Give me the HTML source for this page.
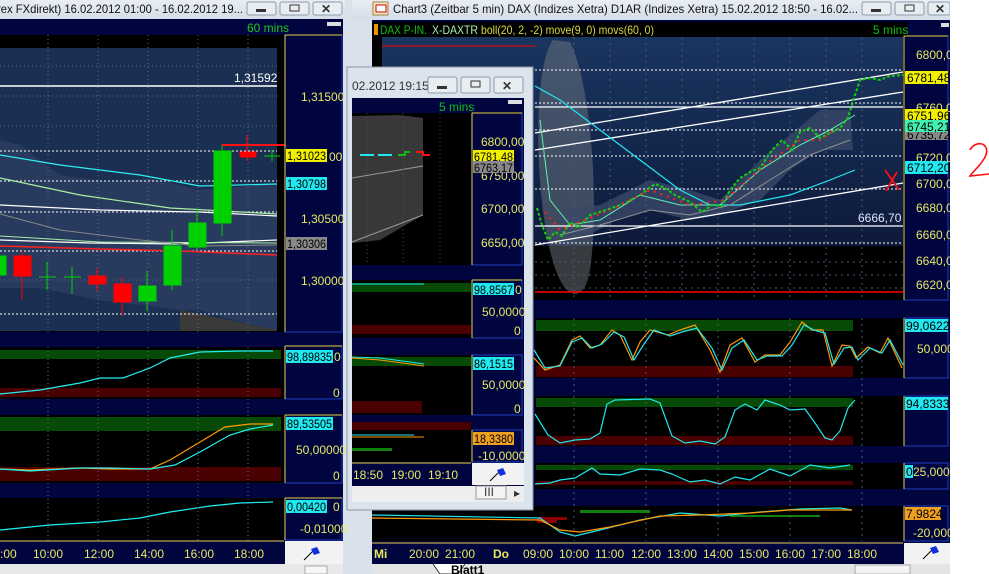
<!DOCTYPE html>
<html><head><meta charset="utf-8"><style>
html,body{margin:0;padding:0;background:#fff;overflow:hidden}
svg{display:block}
text{font-family:"Liberation Sans",sans-serif;font-size:12px}
</style></head><body>
<svg width="989" height="574" viewBox="0 0 989 574" xmlns="http://www.w3.org/2000/svg">
<defs>
<linearGradient id="bg1" x1="0" y1="0" x2="0" y2="1"><stop offset="0" stop-color="#1a3560"/><stop offset="1" stop-color="#0d1a3a"/></linearGradient>
<linearGradient id="tb" x1="0" y1="0" x2="0" y2="1"><stop offset="0" stop-color="#e9eef4"/><stop offset="1" stop-color="#d5dde8"/></linearGradient>
</defs>
<!-- ============ LEFT WINDOW ============ -->
<rect x="0" y="0" width="352" height="574" fill="#d9e1ea"/>
<rect x="0" y="0" width="345" height="19" fill="url(#tb)"/>
<text x="-3" y="13" fill="#111" textLength="246" lengthAdjust="spacingAndGlyphs">rex FXdirekt) 16.02.2012 01:00 - 16.02.2012 19...</text>
<g fill="#e8edf2" stroke="#8e9aa8"><rect x="247" y="2" width="29" height="13" rx="2"/><rect x="280" y="2" width="29" height="13" rx="2"/><rect x="313" y="2" width="29" height="13" rx="2"/></g>
<rect x="256" y="9" width="10" height="3" fill="#333"/><rect x="290" y="5" width="9" height="6" fill="none" stroke="#333"/>
<text x="321" y="13" fill="#333" font-weight="bold">✕</text>
<rect x="0" y="19" width="343" height="545" fill="#000540"/>
<text x="247" y="32" fill="#1ec81e">60 mins</text>
<rect x="327" y="22" width="14" height="4" fill="#ddd"/>
<!-- main chart -->
<rect x="0" y="35" width="284" height="297" fill="#000"/>
<rect x="0" y="48" width="277" height="283" fill="#1b2f52"/>
<polygon points="0,140 20,145 60,175 110,182 150,178 200,190 240,187 277,183 277,330 240,322 200,310 180,310 150,306 100,300 40,288 0,288" fill="#2c3e62" opacity="0.8"/>
<polygon points="180,310 277,330 277,331 180,331" fill="#3a3a3a"/>
<g stroke="#5a6a80" stroke-dasharray="1,3" stroke-width="1"><line x1="48" y1="35" x2="48" y2="332"/><line x1="98" y1="35" x2="98" y2="332"/><line x1="148" y1="35" x2="148" y2="332"/><line x1="198" y1="35" x2="198" y2="332"/><line x1="248" y1="35" x2="248" y2="332"/>
<line x1="0" y1="66" x2="277" y2="66"/><line x1="0" y1="96" x2="277" y2="96"/><line x1="0" y1="126" x2="277" y2="126"/><line x1="0" y1="280" x2="277" y2="280"/></g>
<g stroke="#fff" stroke-dasharray="2,2"><line x1="0" y1="151" x2="277" y2="151"/><line x1="0" y1="181" x2="277" y2="181"/><line x1="0" y1="212" x2="277" y2="212"/><line x1="0" y1="251" x2="277" y2="251"/><line x1="0" y1="314" x2="277" y2="314"/></g>
<line x1="0" y1="86" x2="277" y2="86" stroke="#fff" stroke-width="1.5"/>
<text x="234" y="82" fill="#fff">1,31592</text>
<polyline points="0,155 60,165 140,175 200,186 277,184" fill="none" stroke="#2cf0f0" stroke-width="1.2"/>
<polyline points="0,178 80,195 170,208 277,214" fill="none" stroke="#a8f0a0" stroke-width="1.2"/>
<polyline points="0,205 100,210 200,212 277,216" fill="none" stroke="#fff" stroke-width="1.2"/>
<polyline points="0,240 90,243 180,244 277,240" fill="none" stroke="#fff" stroke-width="1.2"/>
<polyline points="0,246 100,249 180,251 277,255" fill="none" stroke="#ff2020" stroke-width="1.5"/>
<polyline points="0,236 100,242 277,243" fill="none" stroke="#a8f0a0" stroke-width="1"/>
<polyline points="0,214 60,230 140,240 200,246 277,245" fill="none" stroke="#888" stroke-width="1"/>
<g fill="#00d000" stroke="#00d000"><rect x="0" y="256" width="6" height="19"/><line x1="47" y1="262" x2="47" y2="290"/><line x1="39" y1="277" x2="56" y2="277"/><line x1="72" y1="267" x2="72" y2="294"/><line x1="64" y1="277" x2="81" y2="277"/>
<line x1="147" y1="271" x2="147" y2="311"/><rect x="139" y="286" width="17" height="15"/><line x1="172" y1="230" x2="172" y2="290"/><rect x="164" y="246" width="17" height="39"/>
<line x1="197" y1="208" x2="197" y2="250"/><rect x="189" y="223" width="17" height="24"/><line x1="222" y1="145" x2="222" y2="236"/><rect x="214" y="151" width="17" height="72"/>
<line x1="272" y1="150" x2="272" y2="161"/><line x1="264" y1="156" x2="280" y2="156"/></g>
<g fill="#ff0000" stroke="#ff0000"><line x1="22" y1="251" x2="22" y2="300"/><rect x="14" y="256" width="17" height="20"/><line x1="97" y1="268" x2="97" y2="291"/><rect x="89" y="276" width="17" height="8"/>
<line x1="122" y1="277" x2="122" y2="316"/><rect x="114" y="284" width="17" height="18"/><line x1="247" y1="135" x2="247" y2="161"/><rect x="240" y="152" width="16" height="5"/></g>
<polyline points="222,145 287,145" stroke="#ff1010" stroke-width="2" fill="none"/>
<polyline points="290,136 306,145 292,154" stroke="#ff1010" stroke-width="2" fill="none"/>
<path d="M322,133 C312,133 310,142 318,145 C326,148 324,156 314,156" stroke="#ff1010" stroke-width="2" fill="none"/>
<path d="M328,130 L326,152 L337,152" stroke="#ff1010" stroke-width="2" fill="none"/>
<rect x="285" y="35" width="57" height="297" fill="#000540" stroke="#2040c0"/>
<line x1="285" y1="35" x2="285" y2="332" stroke="#e8d040"/>
<line x1="285" y1="35" x2="342" y2="35" stroke="#e8d040"/>
<g fill="#e8e860"><text x="301" y="101">1,31500</text><text x="301" y="223">1,30500</text><text x="301" y="285">1,30000</text><text x="329" y="161">00</text></g>
<rect x="286" y="149" width="41" height="13" fill="#f0f000"/><text x="287" y="160" fill="#000" textLength="39" lengthAdjust="spacingAndGlyphs">1,31023</text>
<rect x="286" y="177" width="41" height="13" fill="#20e8f0"/><text x="287" y="188" fill="#000" textLength="39" lengthAdjust="spacingAndGlyphs">1,30798</text>
<rect x="286" y="237" width="41" height="13" fill="#888"/><text x="287" y="248" fill="#000" textLength="39" lengthAdjust="spacingAndGlyphs">1,30306</text>
<!-- osc1 -->
<rect x="0" y="347" width="284" height="52" fill="#000"/>
<rect x="0" y="350" width="281" height="9" fill="#064a06"/><rect x="0" y="388" width="281" height="9" fill="#4a0000"/>
<polyline points="0,394 40,390 80,383 100,378 123,378 150,368 170,358 200,352 240,351 273,351" fill="none" stroke="#20f0f0" stroke-width="1.2"/>
<rect x="285" y="346" width="57" height="53" fill="#000540" stroke="#2040c0"/><line x1="285" y1="346" x2="342" y2="346" stroke="#e8d040"/><line x1="285" y1="346" x2="285" y2="399" stroke="#e8d040"/>
<rect x="286" y="350" width="47" height="13" fill="#20e8f0"/><text x="287" y="361" fill="#000" textLength="45" lengthAdjust="spacingAndGlyphs">98,89835</text><text x="334" y="361" fill="#e8e860">0</text><text x="333" y="397" fill="#e8e860">0</text>
<!-- osc2 -->
<rect x="0" y="415" width="284" height="68" fill="#000"/>
<rect x="0" y="417" width="281" height="14" fill="#064a06"/><rect x="0" y="467" width="281" height="14" fill="#4a0000"/>
<polyline points="0,469 30,470 80,468 110,469 150,469 170,460 200,442 225,427 250,424 273,424" fill="none" stroke="#ff9900" stroke-width="1.2"/>
<polyline points="0,469 30,471 80,468 110,468 150,469 175,465 200,452 230,435 250,429 273,425" fill="none" stroke="#20f0f0" stroke-width="1.2"/>
<rect x="285" y="415" width="57" height="68" fill="#000540" stroke="#2040c0"/><line x1="285" y1="415" x2="342" y2="415" stroke="#e8d040"/><line x1="285" y1="415" x2="285" y2="483" stroke="#e8d040"/>
<rect x="286" y="417" width="47" height="13" fill="#20e8f0"/><text x="287" y="428" fill="#000" textLength="45" lengthAdjust="spacingAndGlyphs">89,53505</text><text x="296" y="454" fill="#e8e860">50,00000</text><text x="333" y="480" fill="#e8e860">0</text>
<!-- osc3 -->
<rect x="0" y="498" width="284" height="42" fill="#000"/>
<polyline points="0,530 50,525 100,522 140,518 170,512 210,506 240,503 273,502" fill="none" stroke="#20f0f0" stroke-width="1.2"/>
<rect x="285" y="498" width="57" height="42" fill="#000540" stroke="#2040c0"/><line x1="285" y1="498" x2="342" y2="498" stroke="#e8d040"/><line x1="285" y1="498" x2="285" y2="540" stroke="#e8d040"/>
<rect x="286" y="500" width="41" height="13" fill="#20e8f0"/><text x="287" y="511" fill="#000" textLength="39" lengthAdjust="spacingAndGlyphs">0,00420</text><text x="333" y="511" fill="#e8e860">0</text><text x="300" y="533" fill="#e8e860">-0,01000</text>
<g stroke="#5a6a80" stroke-dasharray="1,3"><line x1="48" y1="347" x2="48" y2="540"/><line x1="98" y1="347" x2="98" y2="540"/><line x1="148" y1="347" x2="148" y2="540"/><line x1="198" y1="347" x2="198" y2="540"/><line x1="248" y1="347" x2="248" y2="540"/></g>
<line x1="0" y1="541" x2="284" y2="541" stroke="#e8d040"/>
<g fill="#e8e860"><text x="0" y="558">:00</text><text x="33" y="558">10:00</text><text x="84" y="558">12:00</text><text x="134" y="558">14:00</text><text x="184" y="558">16:00</text><text x="234" y="558">18:00</text></g>
<rect x="285" y="541" width="58" height="23" fill="#f2f2f2"/>
<path d="M304,560 L316,548" stroke="#000"/><path d="M311,549 L317,547 L320,553 L314,555 Z" fill="#1030e0"/>
<rect x="0" y="564" width="343" height="10" fill="#e8e8e8"/><rect x="305" y="566" width="22" height="8" fill="#f6f6f6" stroke="#aaa"/>
<!-- ============ RIGHT WINDOW ============ -->
<rect x="352" y="0" width="598" height="574" fill="#d9e1ea"/>
<rect x="352" y="0" width="598" height="19" fill="url(#tb)"/>
<rect x="373" y="2" width="15" height="13" fill="#f4e8c0" stroke="#a08040"/><rect x="376" y="5" width="10" height="7" fill="#fff" stroke="#c00"/>
<text x="393" y="13" fill="#111" textLength="465" lengthAdjust="spacingAndGlyphs">Chart3 (Zeitbar 5 min)  DAX (Indizes Xetra) D1AR (Indizes Xetra) 15.02.2012 18:50 - 16.02...</text>
<g fill="#e8edf2" stroke="#8e9aa8"><rect x="862" y="2" width="29" height="13" rx="2"/><rect x="895" y="2" width="29" height="13" rx="2"/><rect x="928" y="2" width="22" height="13" rx="2"/></g>
<rect x="871" y="9" width="10" height="3" fill="#333"/><rect x="905" y="5" width="9" height="6" fill="none" stroke="#333"/><text x="935" y="13" fill="#333" font-weight="bold">✕</text>
<rect x="372" y="20" width="578" height="554" fill="#000540"/>
<rect x="372" y="22" width="535" height="14" fill="#000"/>
<rect x="374" y="24" width="4" height="11" fill="#f09000"/>
<text x="380" y="34" fill="#10c010" textLength="47" lengthAdjust="spacingAndGlyphs">DAX P-IN.</text><text x="432" y="34" fill="#a8f0a8" textLength="46" lengthAdjust="spacingAndGlyphs">X-DAXTR</text><text x="481" y="34" fill="#d8d840" textLength="173" lengthAdjust="spacingAndGlyphs">boll(20, 2, -2) move(9, 0) movs(60, 0)</text>
<text x="873" y="34" fill="#10c010">5 mins</text><rect x="941" y="23" width="8" height="4" fill="#ddd"/>
<rect x="372" y="36" width="532" height="264" fill="#000"/>
<rect x="382" y="37" width="521" height="209" fill="url(#bg1)"/>
<line x1="382" y1="46" x2="535" y2="46" stroke="#ff0000"/>
<path d="M553,40 C530,70 535,230 560,280 C570,300 585,300 590,270 C600,200 590,80 570,42 Z" fill="#707880" opacity="0.5"/>
<polygon points="560,210 600,205 650,180 690,190 720,200 760,160 790,135 820,110 850,110 853,150 820,150 790,170 760,200 720,215 690,220 650,210 620,218 580,240 560,245" fill="#3a4868" opacity="0.8"/>
<g stroke="#4a5a78" stroke-dasharray="2,4"><line x1="574" y1="37" x2="574" y2="300"/><line x1="610" y1="37" x2="610" y2="300"/><line x1="646" y1="37" x2="646" y2="300"/><line x1="682" y1="37" x2="682" y2="300"/><line x1="718" y1="37" x2="718" y2="300"/><line x1="754" y1="37" x2="754" y2="300"/><line x1="790" y1="37" x2="790" y2="300"/><line x1="826" y1="37" x2="826" y2="300"/><line x1="862" y1="37" x2="862" y2="300"/>
<line x1="535" y1="262" x2="903" y2="262"/><line x1="535" y1="275" x2="903" y2="275"/><line x1="535" y1="288" x2="903" y2="288"/></g>
<g stroke="#fff" stroke-dasharray="2,2"><line x1="535" y1="70" x2="903" y2="70"/><line x1="535" y1="103" x2="903" y2="103"/><line x1="535" y1="130" x2="903" y2="130"/><line x1="535" y1="156" x2="903" y2="156"/><line x1="535" y1="189" x2="903" y2="189"/><line x1="535" y1="243" x2="903" y2="243"/></g>
<g stroke="#fff" stroke-width="1.3"><line x1="535" y1="133" x2="903" y2="72"/><line x1="535" y1="150" x2="903" y2="92"/><line x1="535" y1="107" x2="903" y2="107"/><line x1="535" y1="226" x2="903" y2="226"/><line x1="535" y1="245" x2="903" y2="183"/></g>
<text x="858" y="222" fill="#e0e8ff">6666,70</text>
<polyline points="535,86 560,100 600,130 640,160 680,190 710,205 740,205 790,195 830,180 855,170" fill="none" stroke="#20e8f0" stroke-width="1.2"/>
<polyline points="540,120 550,200 570,225 600,220 640,195 680,205 720,205 760,170 800,145 830,130 855,115" fill="none" stroke="#60f0b0" stroke-width="1"/>
<polyline points="560,235 600,225 650,210 690,215 730,205 770,180 810,155 850,140" fill="none" stroke="#909090" stroke-width="1"/>
<polyline points="537,208 542,225 548,240 555,232 562,236 570,222 578,228 590,215 600,212 612,208 625,203 640,195 655,184 665,188 675,195 690,202 702,212 712,205 722,206 730,190 740,178 750,172 760,168 772,150 782,140 792,150 800,132 810,128 820,138 830,133 840,128 848,118 855,95 860,80 870,78 880,80 890,76 903,75" fill="none" stroke="#10d010" stroke-width="2" stroke-dasharray="3,2"/>
<polyline points="545,212 560,230 610,210 650,190 690,205 725,200 765,165 800,140 820,140 835,130" fill="none" stroke="#ff2020" stroke-width="2" stroke-dasharray="2,5"/>
<line x1="535" y1="292" x2="903" y2="292" stroke="#ff0000" stroke-width="1.5"/>
<path d="M885,170 L899,190 M897,172 L886,191" stroke="#ff1010" stroke-width="1.8"/>
<rect x="904" y="36" width="44" height="264" fill="#000540" stroke="#2040c0"/><line x1="904" y1="36" x2="904" y2="300" stroke="#e8d040"/><line x1="904" y1="36" x2="948" y2="36" stroke="#e8d040"/>
<g fill="#e8e860"><text x="916" y="59">6800,0</text><text x="916" y="112">6760,0</text><text x="916" y="162">6720,0</text><text x="916" y="188">6700,0</text><text x="916" y="212">6680,0</text><text x="916" y="239">6660,0</text><text x="916" y="265">6640,0</text><text x="916" y="289">6620,0</text></g>
<rect x="905" y="71" width="43" height="13" fill="#f0f000"/><text x="907" y="82" fill="#000">6781,48</text>
<rect x="905" y="129" width="43" height="11" fill="#888"/><text x="907" y="139" fill="#000">6735,72</text>
<rect x="905" y="109" width="43" height="12" fill="#f0f000"/><text x="907" y="120" fill="#000">6751,96</text>
<rect x="905" y="120" width="43" height="12" fill="#40f0b0"/><text x="907" y="131" fill="#000">6745,21</text>
<rect x="905" y="161" width="43" height="13" fill="#20e8f0"/><text x="907" y="172" fill="#000">6712,20</text>
<!-- right osc1 -->
<rect x="535" y="318" width="368" height="60" fill="#000"/>
<rect x="536" y="320" width="317" height="11" fill="#064a06"/><rect x="536" y="366" width="317" height="11" fill="#4a0000"/>
<polyline points="534,358 545,370 560,365 572,340 580,336 590,348 600,345 612,330 620,335 632,360 640,342 650,330 668,335 680,330 695,325 710,350 720,372 730,345 742,338 755,362 765,355 780,355 790,342 802,322 812,330 823,330 832,366 842,345 850,346 856,358 868,347 880,353 888,338 902,368" fill="none" stroke="#ff9900" stroke-width="1.2"/>
<polyline points="534,350 545,368 560,366 572,342 582,338 592,348 602,344 614,332 624,337 634,360 644,344 654,330 670,336 682,332 697,328 712,348 722,370 732,348 744,340 757,360 767,356 782,356 792,345 804,325 814,330 825,333 834,364 844,348 852,347 858,360 870,348 882,353 890,340 903,365" fill="none" stroke="#20e8f0" stroke-width="1.2"/>
<rect x="904" y="318" width="44" height="60" fill="#000540" stroke="#2040c0"/><line x1="904" y1="318" x2="904" y2="378" stroke="#e8d040"/>
<rect x="905" y="319" width="43" height="13" fill="#20e8f0"/><text x="906" y="330" fill="#000">99,0622</text><text x="917" y="353" fill="#e8e860">50,000</text>
<!-- right osc2 -->
<rect x="535" y="396" width="368" height="50" fill="#000"/>
<rect x="536" y="398" width="317" height="9" fill="#064a06"/><rect x="536" y="436" width="317" height="9" fill="#4a0000"/>
<polyline points="535,414 548,435 560,443 575,440 590,439 600,433 607,404 615,400 650,399 660,403 672,436 685,443 700,441 715,444 725,437 735,410 745,404 757,410 765,400 780,405 790,410 805,409 815,423 825,438 832,440 840,431 848,408 855,400" fill="none" stroke="#20e8f0" stroke-width="1.2"/>
<rect x="904" y="396" width="44" height="50" fill="#000540" stroke="#2040c0"/><line x1="904" y1="396" x2="904" y2="446" stroke="#e8d040"/>
<rect x="905" y="397" width="43" height="13" fill="#20e8f0"/><text x="906" y="408" fill="#000">94,8333</text>
<!-- right osc3 -->
<rect x="535" y="463" width="368" height="26" fill="#000"/>
<rect x="536" y="465" width="317" height="5" fill="#064a06"/><rect x="536" y="481" width="317" height="4" fill="#4a0000"/>
<polyline points="535,484 550,483 560,480 575,478 592,468 600,474 620,475 640,469 660,470 672,474 690,482 705,480 720,484 735,477 750,480 770,469 790,476 810,465 830,468 850,465" fill="none" stroke="#20e8f0" stroke-width="1.2"/>
<rect x="904" y="463" width="44" height="26" fill="#000540" stroke="#2040c0"/><line x1="904" y1="463" x2="904" y2="489" stroke="#e8d040"/>
<rect x="905" y="465" width="8" height="13" fill="#20e8f0"/><text x="906" y="476" fill="#000">0</text><text x="913" y="476" fill="#e8e860">25,000</text>
<!-- macd -->
<rect x="372" y="506" width="531" height="35" fill="#000"/>
<g fill="#8b0000"><rect x="537" y="517" width="20" height="6"/><rect x="557" y="517" width="10" height="3"/></g>
<g fill="#108010"><rect x="580" y="510" width="70" height="3"/><rect x="730" y="515" width="90" height="2"/></g>
<polyline points="372,515 540,518 560,532 575,536 600,530 640,520 680,513 720,516 760,512 800,509 840,508 852,510" fill="none" stroke="#20e8f0" stroke-width="1.2"/>
<polyline points="372,518 540,520 560,530 580,532 610,527 660,516 700,515 750,513 790,510 830,510 852,510" fill="none" stroke="#ff9900" stroke-width="1.2"/>
<rect x="904" y="506" width="44" height="35" fill="#000540" stroke="#2040c0"/><line x1="904" y1="506" x2="904" y2="541" stroke="#e8d040"/>
<rect x="905" y="507" width="36" height="13" fill="#f0a020"/><text x="906" y="518" fill="#000">7,9824</text><text x="913" y="537" fill="#e8e860">-20,000</text>
<g stroke="#4a5a78" stroke-dasharray="2,4"><line x1="574" y1="318" x2="574" y2="541"/><line x1="646" y1="318" x2="646" y2="541"/><line x1="718" y1="318" x2="718" y2="541"/><line x1="790" y1="318" x2="790" y2="541"/><line x1="862" y1="318" x2="862" y2="541"/></g>
<line x1="372" y1="543" x2="903" y2="543" stroke="#e8d040"/>
<g fill="#e8e860"><text x="374" y="558" font-weight="bold">Mi</text><text x="409" y="558">20:00</text><text x="445" y="558">21:00</text><text x="493" y="558" font-weight="bold">Do</text><text x="523" y="558">09:00</text><text x="559" y="558">10:00</text><text x="595" y="558">11:00</text><text x="631" y="558">12:00</text><text x="667" y="558">13:00</text><text x="703" y="558">14:00</text><text x="739" y="558">15:00</text><text x="775" y="558">16:00</text><text x="811" y="558">17:00</text><text x="847" y="558">18:00</text></g>
<rect x="904" y="543" width="46" height="21" fill="#f2f2f2"/>
<path d="M923,559 L935,547" stroke="#000"/><path d="M930,548 L936,546 L939,552 L933,554 Z" fill="#1030e0"/>
<rect x="372" y="564" width="578" height="10" fill="#e4e4e4"/>
<path d="M433,564 L440,574 L458,574 L465,564" fill="#fff" stroke="#333"/><text x="451" y="574" fill="#000" font-weight="bold" font-size="11">Blatt1</text>
<rect x="855" y="565" width="55" height="9" fill="#f4f4f4" stroke="#aaa"/>
<!-- ============ FLOATING WINDOW ============ -->
<rect x="347" y="67" width="186" height="443" fill="#dbe3ec" stroke="#8a96a6"/>
<text x="352" y="90" fill="#333">02.2012 19:15</text>
<g fill="#e8edf2" stroke="#8e9aa8"><rect x="428" y="77" width="29" height="16" rx="2"/><rect x="461" y="77" width="29" height="16" rx="2"/><rect x="494" y="77" width="29" height="16" rx="2"/></g>
<rect x="437" y="86" width="10" height="3" fill="#333"/><rect x="471" y="81" width="9" height="6" fill="none" stroke="#333"/><text x="502" y="90" fill="#333" font-weight="bold">✕</text>
<rect x="352" y="98" width="172" height="388" fill="#000540"/>
<text x="439" y="111" fill="#10c010">5 mins</text><rect x="508" y="100" width="14" height="4" fill="#ddd"/>
<rect x="352" y="113" width="119" height="152" fill="#000"/>
<polygon points="352,116 400,115 423,118 423,215 380,240 352,243" fill="#383838"/>
<line x1="352" y1="178" x2="423" y2="166" stroke="#999"/><line x1="352" y1="242" x2="423" y2="215" stroke="#999"/>
<g stroke="#20e8f0" stroke-width="2"><line x1="360" y1="155" x2="374" y2="155"/><line x1="378" y1="155" x2="392" y2="155"/></g>
<path d="M398,155 L405,155 L405,152 L410,152" stroke="#10c010" stroke-width="2" fill="none"/><path d="M416,152 L423,152 L423,155 L430,155" stroke="#ff1010" stroke-width="2" fill="none"/>
<g stroke="#555" stroke-dasharray="1,3"><line x1="367" y1="113" x2="367" y2="265"/><line x1="403" y1="113" x2="403" y2="265"/><line x1="440" y1="113" x2="440" y2="265"/></g>
<rect x="472" y="113" width="50" height="152" fill="#000540" stroke="#2040c0"/><line x1="472" y1="113" x2="472" y2="265" stroke="#e8d040"/><line x1="472" y1="113" x2="522" y2="113" stroke="#e8d040"/>
<g fill="#e8e860"><text x="481" y="146">6800,00</text><text x="481" y="180">6750,00</text><text x="481" y="213">6700,00</text><text x="481" y="247">6650,00</text></g>
<rect x="473" y="150" width="41" height="12" fill="#f0f000"/><text x="474" y="161" fill="#000" textLength="39" lengthAdjust="spacingAndGlyphs">6781,48</text>
<rect x="473" y="161" width="41" height="12" fill="#888"/><text x="474" y="172" fill="#000" textLength="39" lengthAdjust="spacingAndGlyphs">6763,17</text>
<rect x="352" y="280" width="119" height="58" fill="#000"/>
<rect x="352" y="283" width="119" height="9" fill="#064a06"/><rect x="352" y="325" width="119" height="9" fill="#4a0000"/>
<line x1="352" y1="284" x2="424" y2="284" stroke="#20e8f0"/>
<rect x="472" y="280" width="50" height="58" fill="#000540" stroke="#2040c0"/><line x1="472" y1="280" x2="472" y2="338" stroke="#e8d040"/><line x1="472" y1="280" x2="522" y2="280" stroke="#e8d040"/>
<rect x="473" y="283" width="41" height="12" fill="#20e8f0"/><text x="474" y="294" fill="#000" textLength="39" lengthAdjust="spacingAndGlyphs">98,8567</text><text x="515" y="294" fill="#e8e860">0</text><text x="482" y="316" fill="#e8e860">50,0000</text><text x="514" y="335" fill="#e8e860">0</text>
<rect x="352" y="355" width="119" height="60" fill="#000"/>
<rect x="352" y="357" width="119" height="9" fill="#064a06"/><rect x="352" y="401" width="70" height="12" fill="#4a0000"/>
<polyline points="352,358 380,360 410,364 424,366" stroke="#ff9900" fill="none"/><polyline points="352,357 380,358 410,362 424,364" stroke="#20e8f0" fill="none"/>
<rect x="472" y="355" width="50" height="60" fill="#000540" stroke="#2040c0"/><line x1="472" y1="355" x2="472" y2="415" stroke="#e8d040"/>
<rect x="473" y="357" width="41" height="13" fill="#20e8f0"/><text x="474" y="368" fill="#000" textLength="39" lengthAdjust="spacingAndGlyphs">86,1515</text><text x="482" y="389" fill="#e8e860">50,0000</text><text x="514" y="413" fill="#e8e860">0</text>
<rect x="352" y="430" width="119" height="32" fill="#000"/>
<rect x="352" y="422" width="119" height="8" fill="#4a0000"/>
<line x1="352" y1="435" x2="414" y2="435" stroke="#20e8f0"/><line x1="352" y1="437" x2="424" y2="437" stroke="#ff9900"/>
<rect x="352" y="448" width="40" height="3" fill="#108010"/>
<rect x="472" y="430" width="50" height="32" fill="#000540" stroke="#2040c0"/><line x1="472" y1="430" x2="472" y2="462" stroke="#e8d040"/>
<rect x="473" y="432" width="41" height="13" fill="#f0a020"/><text x="474" y="443" fill="#000" textLength="39" lengthAdjust="spacingAndGlyphs">18,3380</text><text x="478" y="460" fill="#e8e860">-10,0000</text>
<line x1="352" y1="463" x2="471" y2="463" stroke="#e8d040"/>
<g fill="#e8e860"><text x="353" y="479">18:50</text><text x="391" y="479">19:00</text><text x="428" y="479">19:10</text></g>
<rect x="472" y="463" width="52" height="22" fill="#f2f2f2"/>
<path d="M490,481 L502,469" stroke="#000"/><path d="M497,470 L503,468 L506,474 L500,476 Z" fill="#1030e0"/>
<rect x="352" y="486" width="172" height="16" fill="#eeeeee"/>
<rect x="476" y="486" width="30" height="13" fill="#f4f4f4" stroke="#999"/><text x="484" y="496" fill="#333" font-size="9">III</text>
<text x="514" y="497" fill="#333" font-size="9">▸</text>
<rect x="950" y="0" width="39" height="574" fill="#fff"/>
<path d="M970,150 C975,140 990,142 986,155 C982,165 972,172 970,176 L989,174" stroke="#ff1010" stroke-width="1.6" fill="none"/>
</svg>
</body></html>
